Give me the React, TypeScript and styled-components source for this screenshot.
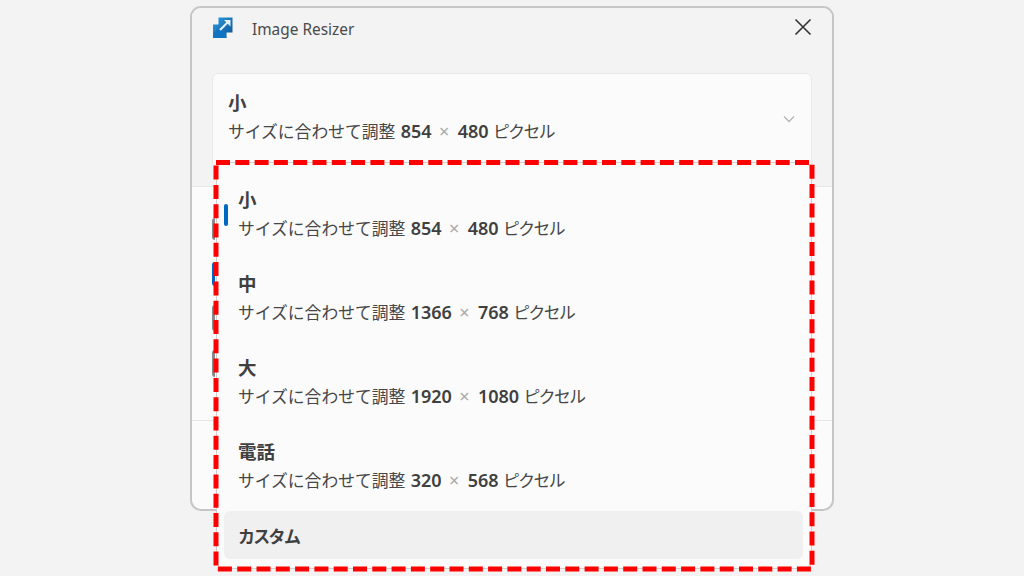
import styled, { createGlobalStyle } from "styled-components";

interface ISizePreset {
  name: string;
  width: number;
  height: number;
}

const presets: ISizePreset[] = [
  { name: "小", width: 854, height: 480 },
  { name: "中", width: 1366, height: 768 },
  { name: "大", width: 1920, height: 1080 },
  { name: "電話", width: 320, height: 568 },
];

const markers = [
  { height: 22, gap: 0, active: false },
  { height: 24, gap: 22, active: true },
  { height: 26, gap: 19, active: false },
  { height: 27, gap: 19, active: false },
];

const GlobalStyle = createGlobalStyle`
  html, body {
    margin: 0;
    padding: 0;
    background: #f3f3f3;
  }
  body {
    font-family: "Noto Sans", "Noto Sans CJK JP", sans-serif;
    color: #404040;
  }
`;

const Page = styled.div`
  position: relative;
  display: flex;
  justify-content: center;
  box-sizing: border-box;
  width: 1024px;
  height: 576px;
  padding-top: 6px;
  overflow: hidden;
`;
const Window = styled.div`
  display: flex;
  flex-direction: column;
  box-sizing: border-box;
  width: 644px;
  height: 505px;
  border: 2px solid #c6c6c6;
  border-radius: 11px;
  background: #fbfbfb;
  overflow: hidden;
`;
const TopArea = styled.div`
  height: 178px;
  flex-shrink: 0;
  background: #f3f3f3;
  border-bottom: 1px solid #e6e6e6;
`;
const TitleBar = styled.div`
  display: flex;
  align-items: center;
  height: 42px;
  padding: 0 20px;
`;
const IconSvg = styled.svg`
  margin-bottom: 2px;
`;
const AppTitle = styled.span`
  margin-left: 18px;
  font-size: 15.4px;
  color: #4a4a4a;
`;
const CloseButton = styled.button`
  display: flex;
  margin: 0 0 5px auto;
  padding: 0;
  border: 0;
  background: none;
`;
const ComboBox = styled.div`
  display: flex;
  align-items: flex-start;
  justify-content: space-between;
  box-sizing: border-box;
  height: 96px;
  margin: 23px 20px 0;
  padding: 15px 16px 0 15px;
  background: #fbfbfb;
  border: 1px solid #e8e8e8;
  border-radius: 6px;
`;
const Chevron = styled.svg`
  margin-top: 26px;
`;
const MarkerColumn = styled.div`
  display: flex;
  flex-direction: column;
  align-items: flex-start;
  height: 234px;
  flex-shrink: 0;
  box-sizing: border-box;
  padding: 31px 0 0 20px;
  border-bottom: 1px solid #e6e6e6;
`;
const Marker = styled.div<{ $height: number; $gap: number; $active: boolean }>`
  width: 3px;
  height: ${(p) => p.$height}px;
  margin-top: ${(p) => p.$gap}px;
  border-radius: 3px 0 0 3px;
  background: ${(p) => (p.$active ? "#0067c0" : "#8a8a8a")};
`;
const Flyout = styled.div`
  position: absolute;
  left: 216px;
  top: 162px;
  box-sizing: border-box;
  width: 596px;
  height: 407px;
  padding: 12px 7px 0;
  background: #fbfbfb;
  border: 1px solid #cfcfcf;
  border-radius: 8px;
`;
const Option = styled.div<{ $selected?: boolean }>`
  position: relative;
  box-sizing: border-box;
  height: 84px;
  padding: 11px 14px 0;

  &::before {
    content: "";
    display: ${(p) => (p.$selected ? "block" : "none")};
    position: absolute;
    left: 0;
    top: 29px;
    width: 4px;
    height: 22px;
    border-radius: 2px;
    background: #0067c0;
  }
`;
const CustomOption = styled.div`
  display: flex;
  align-items: center;
  box-sizing: border-box;
  height: 48px;
  width: 579px;
  padding-left: 14px;
  border-radius: 6px;
  background: #f0f0f0;
  font-size: 17px;
  letter-spacing: -1.7px;
  font-weight: 600;
  color: #404040;
`;
const PresetName = styled.div`
  font-size: 18.5px;
  line-height: 28px;
  font-weight: 600;
  color: #404040;
`;
const PresetSize = styled.div`
  font-size: 16.8px;
  line-height: 28px;
  white-space: nowrap;
  color: #464646;
`;
const Num = styled.span`
  margin-left: 1px;
  font-size: 18px;
  font-weight: 600;
  color: #404040;
`;
const Times = styled.span`
  margin: 0 3px;
  font-size: 18px;
  color: #a8a8a8;
`;
const Unit = styled.span`
  letter-spacing: -1.5px;
`;
const Annotation = styled.svg`
  position: absolute;
  left: 0;
  top: 0;
`;

function PresetText({ preset }: { preset: ISizePreset }) {
  return (
    <>
      <PresetName>{preset.name}</PresetName>
      <PresetSize>
        サイズに合わせて調整 <Num>{preset.width}</Num> <Times>×</Times>{" "}
        <Num>{preset.height}</Num> <Unit>ピクセル</Unit>
      </PresetSize>
    </>
  );
}

function AppIcon() {
  return (
    <IconSvg width="22" height="22" viewBox="0 0 22 22">
      <defs>
        <linearGradient id="bg" x1="0" y1="0" x2="1" y2="1">
          <stop offset="0" stopColor="#2a9fe6" />
          <stop offset="1" stopColor="#0c4f8e" />
        </linearGradient>
      </defs>
      <path d="M6.5 0.5h14v15h-6v5.500h-13.500v-13.500h5.500z" fill="url(#bg)" />
      <path d="M1 17l4.500-5.500 4 3.500 3-1 2 7H2a1 1 0 0 1-1-1z" fill="#0f74c2" />
      <path d="M8 13l7.500-7.500" fill="none" stroke="#e4f1fa" strokeWidth="2.200" />
      <path d="M12 3h6.500v6.500z" fill="#e4f1fa" />
    </IconSvg>
  );
}

function App() {
  return (
    <Page>
      <GlobalStyle />
      <Window>
        <TopArea>
          <TitleBar>
            <AppIcon />
            <AppTitle>Image Resizer</AppTitle>
            <CloseButton>
              <svg width="18" height="18" viewBox="0 0 18 18">
                <path d="M1.5 1.5l15 15M16.5 1.5l-15 15" stroke="#333" strokeWidth="1.6" />
              </svg>
            </CloseButton>
          </TitleBar>
          <ComboBox>
            <div>
              <PresetText preset={presets[0]} />
            </div>
            <Chevron width="12" height="8" viewBox="0 0 12 8">
              <path d="M1 1.5l5 5 5-5" fill="none" stroke="#b4b4b4" strokeWidth="1.3" />
            </Chevron>
          </ComboBox>
        </TopArea>
        <MarkerColumn>
          {markers.map((m, i) => (
            <Marker key={i} $height={m.height} $gap={m.gap} $active={m.active} />
          ))}
        </MarkerColumn>
      </Window>
      <Flyout>
        {presets.map((p, i) => (
          <Option key={p.name} $selected={i === 0}>
            <PresetText preset={p} />
          </Option>
        ))}
        <CustomOption>カスタム</CustomOption>
      </Flyout>
      <Annotation width="1024" height="576" viewBox="0 0 1024 576">
        <rect
          x="216"
          y="162.5"
          width="596"
          height="406.5"
          fill="none"
          stroke="#ff0000"
          strokeWidth="5"
          strokeDasharray="14 5.3"
        />
      </Annotation>
    </Page>
  );
}
export default App;
